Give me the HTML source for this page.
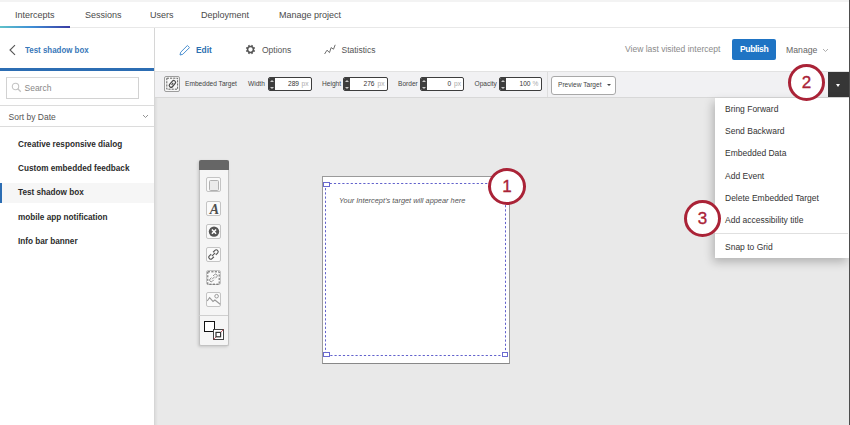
<!DOCTYPE html>
<html><head><meta charset="utf-8">
<style>
*{box-sizing:border-box;margin:0;padding:0}
html,body{width:850px;height:425px;overflow:hidden;background:#fff;font-family:"Liberation Sans",sans-serif;color:#333;position:relative}
.abs{position:absolute}
.t{position:absolute;white-space:nowrap;line-height:1}
.nav{font-size:9px;color:#4a4a4a;top:11px}
.li{font-size:8.2px;font-weight:bold;color:#2b2b2b;left:18px}
.tb{font-size:6.6px;color:#444;top:81px}
.inp{position:absolute;top:77px;height:14px;border:1px solid #3d3d3d;border-radius:2px;background:#fff;overflow:hidden}
.inp .st{position:absolute;left:0;top:0;width:6px;height:100%;background:#3d3d3d}
.inp .st:before{content:"";position:absolute;left:1px;top:2px;width:0;height:0;border-left:2px solid transparent;border-right:2px solid transparent;border-bottom:2.5px solid #ccc}
.inp .st:after{content:"";position:absolute;left:1px;bottom:1.5px;width:0;height:0;border-left:2px solid transparent;border-right:2px solid transparent;border-top:2.5px solid #ccc}
.num{font-size:6.6px;color:#333;top:81px}
.unit{font-size:6.6px;color:#aaa;top:81px}
.mi{font-size:8.5px;color:#333;left:725px}
.circ{position:absolute;border:3px solid #aa2337;border-radius:50%;background:#fff;text-align:center;color:#aa2337;font-size:17px;line-height:32.5px;-webkit-text-stroke:0.35px #aa2337}
.pal{position:absolute;left:205.5px;width:15.3px;height:15.2px;border:1px solid #c4c4c4;border-radius:2px;background:#fafafa}
</style></head><body>
<!-- top nav -->
<div class="abs" style="left:0;top:0;width:850px;height:2px;background:#f3f3f3"></div>
<div class="t nav" style="left:15px">Intercepts</div>
<div class="t nav" style="left:85px">Sessions</div>
<div class="t nav" style="left:150px">Users</div>
<div class="t nav" style="left:201px">Deployment</div>
<div class="t nav" style="left:279px">Manage project</div>
<div class="abs" style="left:0;top:27px;width:850px;height:1px;background:#e8e8e8"></div>
<div class="abs" style="left:0;top:26px;width:70px;height:2px;background:linear-gradient(90deg,#5fc2c9,#3f8fd6 45%,#3a3ba3)"></div>

<!-- sidebar -->
<div class="abs" style="left:154px;top:28px;width:1px;height:397px;background:#d6d6d6"></div>
<svg class="abs" style="left:8px;top:44px" width="9" height="12" viewBox="0 0 9 12"><path d="M7 1.2 L2 6 L7 10.8" fill="none" stroke="#555" stroke-width="1.1"/></svg>
<div class="t" style="left:25px;top:46px;font-size:9px;font-weight:bold;color:#3878b9;transform:scaleX(0.88);transform-origin:0 0">Test shadow box</div>
<div class="abs" style="left:0;top:68px;width:154px;height:3px;background:#2c6db3"></div>
<div class="abs" style="left:6px;top:76.5px;width:133px;height:22.5px;border:1px solid #d2d2d2;border-top:1.5px solid #dadada;background:#fff"></div>
<svg class="abs" style="left:11px;top:82px" width="11" height="11" viewBox="0 0 11 11"><circle cx="4.5" cy="4.5" r="3.2" fill="none" stroke="#c4c4c4" stroke-width="1.1"/><path d="M6.8 6.8 L9.8 9.8" stroke="#c4c4c4" stroke-width="1.3"/></svg>
<div class="t" style="left:24.5px;top:83.5px;font-size:8.5px;color:#888">Search</div>
<div class="abs" style="left:0;top:105px;width:154px;height:1px;background:#dcdcdc"></div>
<div class="t" style="left:8.5px;top:112.5px;font-size:8.5px;color:#555">Sort by Date</div>
<svg class="abs" style="left:142px;top:114px" width="7" height="5" viewBox="0 0 7 5"><path d="M1 1 L3.5 3.5 L6 1" fill="none" stroke="#888" stroke-width="0.9"/></svg>
<div class="abs" style="left:0;top:126px;width:154px;height:1px;background:#dcdcdc"></div>

<div class="t li" style="top:141px">Creative responsive dialog</div>
<div class="t li" style="top:165px">Custom embedded feedback</div>
<div class="abs" style="left:0;top:183px;width:154px;height:20px;background:#f6f6f6"></div>
<div class="abs" style="left:0;top:183px;width:2px;height:20px;background:#2c6db3"></div>
<div class="t li" style="top:189px">Test shadow box</div>
<div class="t li" style="top:213.5px">mobile app notification</div>
<div class="t li" style="top:238px">Info bar banner</div>

<!-- main header -->
<svg class="abs" style="left:179px;top:43.5px" width="12" height="12" viewBox="0 0 12 12"><path d="M1 11 L1.7 8.2 L8.4 1.5 L10.5 3.6 L3.8 10.3 Z" fill="none" stroke="#4a8fd0" stroke-width="1"/></svg>
<div class="t" style="left:196px;top:45px;font-size:9.5px;font-weight:bold;color:#2c6fb0;transform:scaleX(0.88);transform-origin:0 0">Edit</div>
<svg class="abs" style="left:245px;top:44px" width="11" height="11" viewBox="0 0 11 11"><circle cx="5.5" cy="5.5" r="2.9" fill="none" stroke="#555" stroke-width="1.5"/><path d="M8.27 6.65 L9.84 7.30 M6.65 8.27 L7.30 9.84 M4.35 8.27 L3.70 9.84 M2.73 6.65 L1.16 7.30 M2.73 4.35 L1.16 3.70 M4.35 2.73 L3.70 1.16 M6.65 2.73 L7.30 1.16 M8.27 4.35 L9.84 3.70" stroke="#555" stroke-width="1.5"/></svg>
<div class="t" style="left:262px;top:45.5px;font-size:8.5px;color:#555">Options</div>
<svg class="abs" style="left:324px;top:44px" width="12" height="11" viewBox="0 0 12 11"><path d="M0.6 10 L3 6.2 L5.5 8.6 L7.1 3.6 L9.5 5.2 L11.2 0.8" fill="none" stroke="#666" stroke-width="0.95"/></svg>
<div class="t" style="left:341.5px;top:45.5px;font-size:8.5px;color:#555">Statistics</div>
<div class="t" style="left:625px;top:45px;font-size:8.5px;color:#8a8a8a">View last visited intercept</div>
<div class="abs" style="left:732px;top:39px;width:44px;height:21px;background:#1f74c4;border-radius:2px"></div>
<div class="t" style="left:740px;top:44.5px;font-size:8.6px;font-weight:bold;letter-spacing:-0.4px;color:#fff">Publish</div>
<div class="t" style="left:786px;top:46px;font-size:8.7px;color:#666">Manage</div>
<svg class="abs" style="left:822px;top:48px" width="7" height="5" viewBox="0 0 7 5"><path d="M1 1 L3.5 3.5 L6 1" fill="none" stroke="#999" stroke-width="0.8"/></svg>


<!-- toolbar -->
<div class="abs" style="left:155px;top:71px;width:695px;height:27px;background:#f1f1f3;border-top:1px solid #e2e2e2;border-bottom:1px solid #d8d8d8"></div>
<!-- canvas -->
<div class="abs" style="left:155px;top:98px;width:695px;height:327px;background:#e9e9e9"></div>

<!-- toolbar contents -->
<div class="abs" style="left:164px;top:76px;width:16px;height:15.5px;border:1px solid #9d9d9d;border-radius:2px;background:#f7f7f7"></div>
<svg class="abs" style="left:164px;top:76px" width="16" height="16" viewBox="0 0 16 16"><rect x="2.8" y="2.2" width="10.8" height="11" fill="none" stroke="#555" stroke-width="0.9" stroke-dasharray="2.2 1"/><g transform="rotate(-50 8.4 7.9)" fill="none" stroke="#4a4a4a" stroke-width="1.2"><rect x="4.6" y="6.1" width="7.6" height="3.6" rx="1.6"/><path d="M7.2 7.9 H9.6"/></g></svg>
<div class="t tb" style="left:185px">Embedded Target</div>

<div class="t tb" style="left:248px">Width</div>
<div class="inp" style="left:268px;width:44px"><div class="st"></div></div>
<div class="t num" style="left:288px">289</div><div class="t unit" style="left:301.5px">px</div>

<div class="t tb" style="left:322px">Height</div>
<div class="inp" style="left:343px;width:45px"><div class="st"></div></div>
<div class="t num" style="left:363.5px">276</div><div class="t unit" style="left:377.5px">px</div>

<div class="t tb" style="left:398px">Border</div>
<div class="inp" style="left:420px;width:44px"><div class="st"></div></div>
<div class="t num" style="left:447.5px">0</div><div class="t unit" style="left:454px">px</div>

<div class="t tb" style="left:474.5px">Opacity</div>
<div class="inp" style="left:499px;width:43px"><div class="st"></div></div>
<div class="t num" style="left:519.5px">100</div><div class="t unit" style="left:532.5px">%</div>

<div class="abs" style="left:547px;top:72px;width:1px;height:25px;background:#dedede"></div>
<div class="abs" style="left:551px;top:76px;width:65px;height:18.5px;border:1px solid #a8a8a8;border-radius:3px;background:#fff"></div>
<div class="t tb" style="left:558px;top:82px">Preview Target</div>
<div class="abs" style="left:606.5px;top:84px;border-left:2.3px solid transparent;border-right:2.3px solid transparent;border-top:2.5px solid #444"></div>

<!-- dark dropdown button -->
<div class="abs" style="left:828px;top:72px;width:21px;height:25px;background:#363636"></div>
<div class="abs" style="left:836px;top:84px;border-left:2.5px solid transparent;border-right:2.5px solid transparent;border-top:3px solid #fff"></div>

<!-- palette -->
<div class="abs" style="left:198.5px;top:160px;width:30px;height:186px;background:#f5f5f5;border:1px solid #c2c2c2;border-top:none;border-radius:2px;box-shadow:-1px 1px 3px rgba(0,0,0,0.15)"></div>
<div class="abs" style="left:198.5px;top:160px;width:30px;height:10px;background:#666;border-radius:2px 2px 0 0"></div>
<div class="pal" style="top:177px"></div>
<div class="abs" style="left:208.5px;top:180px;width:10.5px;height:10.5px;border:1px solid #b0b0b0;border-radius:1.5px;background:#ebebeb"></div>
<div class="pal" style="top:200.5px"></div>
<div class="t" style="left:209.8px;top:203px;font-family:'Liberation Serif',serif;font-style:italic;font-weight:bold;font-size:14px;color:#4f4f4f">A</div>
<div class="pal" style="top:223.5px"></div>
<svg class="abs" style="left:208px;top:226px" width="12" height="12" viewBox="0 0 12 12"><circle cx="6" cy="5.6" r="5.2" fill="#555"/><path d="M3.9 3.5 L8.1 7.7 M8.1 3.5 L3.9 7.7" stroke="#fff" stroke-width="1.5"/></svg>
<div class="pal" style="top:246.5px"></div>
<svg class="abs" style="left:206px;top:246.5px" width="15" height="15" viewBox="0 0 15 15"><g transform="rotate(-45 7.5 7.5)" fill="none" stroke="#555" stroke-width="1.1"><path d="M6.2 5.6 H3.6 a1.9 1.9 0 0 0 0 3.8 H6.2"/><path d="M8.8 5.6 H11.4 a1.9 1.9 0 0 1 0 3.8 H8.8"/><path d="M5.2 7.5 H9.8"/></g></svg>
<div class="pal" style="top:269.5px"></div>
<svg class="abs" style="left:207px;top:270.5px" width="13" height="14" viewBox="0 0 13 14"><rect x="0.8" y="0.8" width="11.4" height="12.4" fill="none" stroke="#555" stroke-width="0.9" stroke-dasharray="2.2 1.3"/></svg>
<svg class="abs" style="left:206px;top:269.5px" width="15" height="15" viewBox="0 0 15 15"><g transform="rotate(-45 7.5 8)" fill="none" stroke="#888" stroke-width="0.9"><path d="M6.4 6.3 H4.4 a1.6 1.6 0 0 0 0 3.2 H6.4"/><path d="M8.6 6.3 H10.6 a1.6 1.6 0 0 1 0 3.2 H8.6"/><path d="M5.6 7.9 H9.4"/></g></svg>
<div class="pal" style="top:292px"></div>
<svg class="abs" style="left:206px;top:292px" width="15" height="15" viewBox="0 0 15 15"><path d="M1.2 9 L3.6 5.6 L7 9.4 L8.9 8 L14.2 12.2" fill="none" stroke="#9a9a9a" stroke-width="1.1"/><circle cx="10.6" cy="4.2" r="1.8" fill="none" stroke="#9a9a9a" stroke-width="1"/></svg>
<div class="abs" style="left:199px;top:315px;width:29px;height:1px;background:#cfcfcf"></div>
<div class="abs" style="left:204px;top:321px;width:11px;height:10.5px;border:1px solid #111;background:#fff"></div>
<svg class="abs" style="left:213px;top:329px" width="11" height="11" viewBox="0 0 11 11"><rect x="0.5" y="0.5" width="10" height="10" fill="#fff" stroke="#444" stroke-width="1"/><path d="M0.5 10.5 L10.5 0.5" stroke="#c83845" stroke-width="0.8"/><rect x="3" y="3.4" width="4.6" height="4.4" fill="#fff" stroke="#333" stroke-width="1.2"/></svg>

<!-- target box -->
<div class="abs" style="left:322px;top:176px;width:188px;height:187.5px;background:#fff;border:1px solid #9a9a9a;border-bottom:1.5px solid #888"></div>
<svg class="abs" style="left:324px;top:182px" width="183" height="176" viewBox="0 0 183 176"><rect x="1.5" y="1.5" width="180" height="172" fill="none" stroke="#6262cc" stroke-width="1" stroke-dasharray="2.2 2"/></svg>
<div class="abs" style="left:323px;top:181.5px;width:6.5px;height:5.5px;border:1px solid #6a6ad0;background:#fff"></div>
<div class="abs" style="left:323px;top:352px;width:6.5px;height:5px;border:1px solid #6a6ad0;background:#fff"></div>
<div class="abs" style="left:502px;top:352px;width:6px;height:5px;border:1px solid #6a6ad0;background:#fff"></div>
<div class="t" style="left:339px;top:197px;font-size:7.4px;font-style:italic;color:#555">Your Intercept’s target will appear here</div>

<!-- dropdown menu -->
<div class="abs" style="left:715px;top:98px;width:134px;height:160px;background:#fff;box-shadow:-2px 4px 9px rgba(0,0,0,0.24)"></div>
<div class="t mi" style="top:104.5px">Bring Forward</div>
<div class="t mi" style="top:126.5px">Send Backward</div>
<div class="t mi" style="top:149.0px">Embedded Data</div>
<div class="t mi" style="top:171.5px">Add Event</div>
<div class="t mi" style="top:194.0px">Delete Embedded Target</div>
<div class="t mi" style="top:216.0px">Add accessibility title</div>
<div class="abs" style="left:715px;top:233px;width:133px;height:1px;background:#e0e0e0"></div>
<div class="t mi" style="top:242.5px">Snap to Grid</div>

<!-- callout circles -->
<div class="circ" style="left:488px;top:168px;width:38px;height:37px">1</div>
<div class="circ" style="left:788px;top:64px;width:37px;height:37px">2</div>
<div class="circ" style="left:684px;top:200px;width:37px;height:37px">3</div>

<div class="abs" style="left:849px;top:0;width:1px;height:425px;background:#4d4d4d"></div>
<div class="abs" style="left:155px;top:98px;width:3px;height:327px;background:linear-gradient(90deg,rgba(0,0,0,0.06),rgba(0,0,0,0))"></div>
</body></html>
